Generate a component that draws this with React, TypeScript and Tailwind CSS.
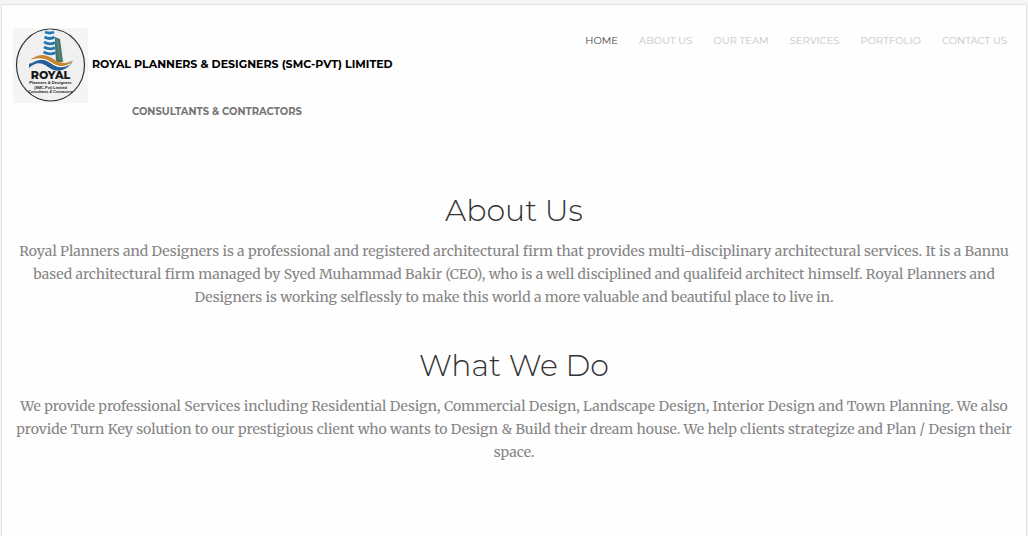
import React from "react";

const links = ["Home", "About Us", "Our Team", "Services", "Portfolio", "Contact Us"];

function Logo() {
  return (
    <svg viewBox="0 0 75 75" className="h-[75px] w-[75px] shrink-0" role="img" aria-label="Royal Planners & Designers logo">
      <rect width="75" height="75" fill="#f5f5f5" />
      <ellipse cx="37.5" cy="37" rx="34" ry="36" fill="#f0f0f0" stroke="#303234" strokeWidth="1.2" />
      <path d="M42 9 L47 11 L50 34 L42 34Z" fill="#48756a" />
      <path d="M44 11 L47 32" stroke="#7d9d8c" strokeWidth=".7" />
      <path d="M32 3 Q37 0 41 3 L43 34 L30 31Z" fill="#eef5fa" />
      <g fill="none" stroke="#2876ad" strokeWidth="2.8">
        <path d="M32 4 Q37 6 41 4" />
        <path d="M31.5 9 Q37 12 41.5 9" />
        <path d="M31 14 Q37 17.5 42 14.5" />
        <path d="M31 19 Q37 22.5 42 19.5" />
        <path d="M30.5 24 Q37 27.5 42.5 24.5" />
      </g>
      <path d="M17 32 C27 24 35 27 42 32 C49 36 54 36 60 32 C53 41 45 39 37 34 C29 29 23 30 17 32Z" fill="#c8862f" />
      <path d="M16 36 C26 29 32 31 39 36 C46 41 53 40 60 33 C53 44 43 45 35 39 C28 34 23 34 16 40Z" fill="#245f97" />
      <path d="M18 35 C28 29 33 31 40 36 C46 40 52 39 57 36" fill="none" stroke="#fff" strokeWidth="1" />
      <g textAnchor="middle" fill="#171717" fontFamily="Liberation Sans, sans-serif">
        <text x="37.5" y="50.5" fontSize="11" fontWeight="800" fontFamily="Montserrat, Inter, sans-serif">ROYAL</text>
        <text x="37.5" y="55.5" fontSize="4.1" fontWeight="700">Planners &amp; Designers</text>
        <text x="37.5" y="60.5" fontSize="3.8" fontWeight="700">(SMC-Pvt) Limited</text>
        <text x="37.5" y="64.5" fontSize="3.5" fontStyle="italic">Consultants &amp; Contractors</text>
      </g>
    </svg>
  );
}

function Section({ title, children }: { title: string; children: React.ReactNode }) {
  return (
    <section className="text-center">
      <h2 className="text-[30px] leading-9 font-light text-[#333]">{title}</h2>
      <p className="mt-[11px] font-['Merriweather','Liberation_Serif',serif] text-sm leading-[23px] text-[#858585]">{children}</p>
    </section>
  );
}

export default function App() {
  return (
    <div className="min-h-screen bg-[#f3f4f4] pt-1 pr-px pl-px font-['Montserrat','Inter',sans-serif]">
      <div className="min-h-[calc(100vh-4px)] border border-b-0 border-[#e3e4e4] bg-[#fefefe]">
        <header className="flex items-start justify-between pt-[23px] pr-[19px] pl-[11px]">
          <div>
            <a href="#home" className="flex items-center gap-1 text-[11px] font-bold text-black">
              <Logo />
              <span className="pb-0.5 whitespace-nowrap">ROYAL PLANNERS &amp; DESIGNERS (SMC-PVT) LIMITED</span>
            </a>
            <p className="pt-px pl-[119px] text-[10px] leading-4 font-bold text-[#757575]">CONSULTANTS &amp; CONTRACTORS</p>
          </div>
          <nav aria-label="Main" className="flex gap-[21px] pt-[5px] text-[10px] leading-4 uppercase">
            {links.map((link, i) => (
              <a
                key={link}
                href={`#${link.toLowerCase().replace(" ", "-")}`}
                aria-current={i === 0 ? "page" : undefined}
                className={i === 0 ? "text-[#444]" : "text-[#c4c4c4]"}
              >
                {link}
              </a>
            ))}
          </nav>
        </header>
        <main className="flex flex-col gap-[39px] px-3.5 pt-[73px] pb-12">
          <Section title="About Us">
            Royal Planners and Designers is a professional and registered architectural firm that provides
            multi-disciplinary architectural services. It is a Bannu based architectural firm managed by Syed
            Muhammad Bakir (CEO), who is a well disciplined and qualifeid architect himself. Royal Planners and
            Designers is working selflessly to make this world a more valuable and beautiful place to live in.
          </Section>
          <Section title="What We Do">
            We provide professional Services including Residential Design, Commercial Design, Landscape Design,
            Interior Design and Town Planning. We also provide Turn Key solution to our prestigious client who wants
            to Design &amp; Build their dream house. We help clients strategize and Plan / Design their space.
          </Section>
        </main>
      </div>
    </div>
  );
}
